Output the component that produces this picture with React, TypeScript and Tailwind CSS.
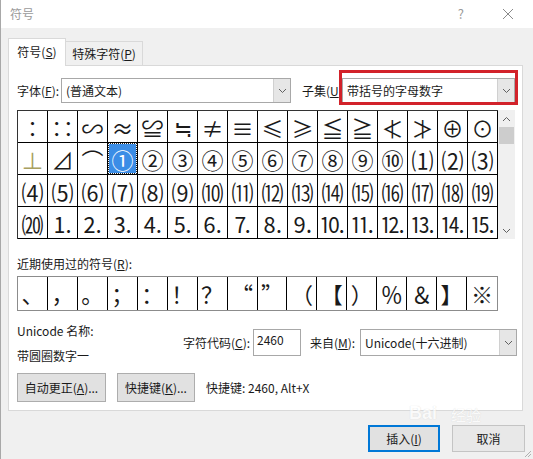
import React from "react";

const ROWS: string[][] = [
  ["∶", "∷", "∽", "≈", "≌", "≒", "≠", "≡", "≤", "≥", "≦", "≧", "≮", "≯", "⊕", "⊙"],
  ["⊥", "⊿", "⌒", "①", "②", "③", "④", "⑤", "⑥", "⑦", "⑧", "⑨", "⑩", "⑴", "⑵", "⑶"],
  ["⑷", "⑸", "⑹", "⑺", "⑻", "⑼", "⑽", "⑾", "⑿", "⒀", "⒁", "⒂", "⒃", "⒄", "⒅", "⒆"],
  ["⒇", "⒈", "⒉", "⒊", "⒋", "⒌", "⒍", "⒎", "⒏", "⒐", "⒑", "⒒", "⒓", "⒔", "⒕", "⒖"],
];

const RECENT = ["、", "，", "。", "；", "：", "！", "？", "“", "”", "（", "【", "）", "％", "＆", "】", "※"];

function Chevron({ up = false }: { up?: boolean }) {
  return (
    <svg width="9" height="6" viewBox="0 0 9 6" className="block">
      <path
        d={up ? "M1 5 L4.5 1.5 L8 5" : "M1 1 L4.5 4.5 L8 1"}
        fill="none"
        stroke="#606060"
        strokeWidth="1"
      />
    </svg>
  );
}

function Select({ text, className = "" }: { text: string; className?: string }) {
  return (
    <div className={`flex items-stretch border border-[#a8a8a8] bg-white ${className}`}>
      <div className="flex flex-1 items-center whitespace-nowrap pl-[4px] text-[12px]">{text}</div>
      <div className="flex w-[17px] items-center justify-center border-l border-[#d0d0d0] bg-[#e6e6e6]">
        <Chevron />
      </div>
    </div>
  );
}

export default function App() {
  return (
    <div className="relative flex h-[459px] w-[533px] flex-col overflow-hidden border-l border-[#a8a8a8] bg-[#f0f0f0] font-[Noto_Sans_CJK_SC,sans-serif] text-[12px] text-[#1a1a1a]">
      {/* title bar */}
      <div className="flex h-[28px] items-center bg-white pl-[9px] pr-[19px]">
        <span className="text-[12px] text-[#9a9a9a]">符号</span>
        <span className="ml-auto mr-[38px] text-[13px] text-[#9a9a9a]">?</span>
        <svg width="12" height="12" viewBox="0 0 12 12">
          <path d="M1 1 L11 11 M11 1 L1 11" stroke="#8a8a8a" strokeWidth="1" />
        </svg>
      </div>

      {/* tabs */}
      <div className="mt-[10px] flex h-[27px] items-end pl-[7px]">
        <div className="relative z-10 -mb-px flex h-[28px] w-[58px] items-center justify-center border border-b-0 border-[#d9d9d9] bg-white pb-[2px]">
          符号(<u>S</u>)
        </div>
        <div className="flex h-[24px] w-[77px] items-center justify-center border border-l-0 border-b-0 border-[#d9d9d9] bg-[#f0f0f0]">
          特殊字符(<u>P</u>)
        </div>
      </div>

      {/* panel */}
      <div className="ml-[7px] flex h-[346px] w-[515px] flex-col border border-[#d9d9d9] bg-white pl-[8px]">
        {/* font row */}
        <div className="mt-[12px] flex h-[25px] items-center">
          <span className="w-[44px] whitespace-nowrap">字体(<u>F</u>):</span>
          <Select text="(普通文本)" className="h-[25px] w-[230px]" />
          <span className="ml-[11px] w-[40px] whitespace-nowrap">子集(<u>U</u>):</span>
          <div className="relative">
            <Select text="带括号的字母数字" className="h-[25px] w-[173px]" />
            <div className="pointer-events-none absolute -bottom-[2px] -left-[3px] -right-[3px] -top-[8px] border-[3px] border-[#d2222a]" />
          </div>
        </div>

        {/* symbol grid */}
        <div className="mt-[7px] flex h-[129px]">
          <div className="grid grid-cols-[repeat(16,30px)] border-l border-t border-[#333] text-[22px] leading-none">
            {ROWS.map((row, r) =>
              row.map((ch, c) => {
                const sel = r === 1 && c === 3;
                return (
                  <div
                    key={`${r}-${c}`}
                    className="flex h-[32px] items-center justify-center border-b border-r border-black"
                  >
                    {sel ? (
                      <div className="flex h-[29px] w-[27px] items-center justify-center bg-[#3b8de6] text-white outline-1 outline-dotted outline-[#222]">
                        {ch}
                      </div>
                    ) : (
                      <span className={r === 1 && c === 0 ? "text-[#a8a060]" : ""}>{ch}</span>
                    )}
                  </div>
                );
              })
            )}
          </div>
          <div className="flex w-[17px] flex-col items-center bg-[#f0f0f0]">
            <div className="flex h-[17px] items-center">
              <Chevron up />
            </div>
            <div className="h-[17px] w-[15px] bg-[#cdcdcd]" />
            <div className="mt-auto flex h-[17px] items-center">
              <Chevron />
            </div>
          </div>
        </div>

        {/* recent */}
        <div className="mt-[17px] h-[16px] leading-[16px]">近期使用过的符号(<u>R</u>):</div>
        <div className="mt-[4px] flex h-[35px] w-[481px] border border-[#8c8c8c] text-[22px]">
          {RECENT.map((ch, i) => (
            <div
              key={i}
              className={`flex w-[30px] items-center justify-center ${i < RECENT.length - 1 ? "border-r border-black" : ""}`}
            >
              {ch}
            </div>
          ))}
        </div>

        {/* unicode info */}
        <div className="mt-[8px] flex h-[50px]">
          <div className="flex w-[166px] flex-col">
            <div className="flex h-[24px] items-center">Unicode 名称:</div>
            <div className="flex h-[26px] items-center">带圆圈数字一</div>
          </div>
          <div className="flex items-start pt-[10px]">
            <span className="flex h-[27px] w-[70px] items-center whitespace-nowrap">字符代码(<u>C</u>):</span>
            <div className="h-[27px] w-[48px] border border-[#a8a8a8] bg-white pl-[3px] pt-[1px] text-[12px]">2460</div>
            <span className="ml-[9px] flex h-[27px] w-[50px] items-center whitespace-nowrap">来自(<u>M</u>):</span>
            <Select text="Unicode(十六进制)" className="h-[27px] w-[157px]" />
          </div>
        </div>

        {/* buttons */}
        <div className="mt-[4px] flex h-[29px] items-center">
          <div className="flex h-[29px] w-[89px] items-center justify-center border border-[#adadad] bg-[#e1e1e1]">
            自动更正(<u>A</u>)...
          </div>
          <div className="ml-[11px] flex h-[29px] w-[78px] items-center justify-center border border-[#adadad] bg-[#e1e1e1]">
            快捷键(<u>K</u>)...
          </div>
          <span className="ml-[11px]">快捷键: 2460, Alt+X</span>
        </div>
      </div>

      {/* dialog buttons */}
      <div className="mt-[14px] flex h-[27px] justify-end pr-[8px]">
        <div className="flex w-[72px] items-center justify-center border-2 border-[#0078d7] bg-[#e1e1e1]">
          插入(<u>I</u>)
        </div>
        <div className="ml-[12px] flex w-[73px] items-center justify-center border border-[#c4c4c4] bg-[#e8e8e8]">
          取消
        </div>
      </div>

      {/* watermark */}
      <div className="pointer-events-none absolute left-[408px] top-[404px] flex items-end gap-[14px] text-white opacity-70 [text-shadow:0_0_1px_#c8c8c8]">
        <span className="font-[Liberation_Sans,sans-serif] text-[18px] font-bold leading-none">Bai</span>
        <span className="text-[15px] leading-none">经验</span>
      </div>

      {/* resize grip */}
      <svg className="absolute bottom-[1px] right-[1px]" width="10" height="10" viewBox="0 0 10 10">
        <path d="M9 3 L3 9 M9 6 L6 9" stroke="#b0b0b0" strokeWidth="1" />
      </svg>
    </div>
  );
}
